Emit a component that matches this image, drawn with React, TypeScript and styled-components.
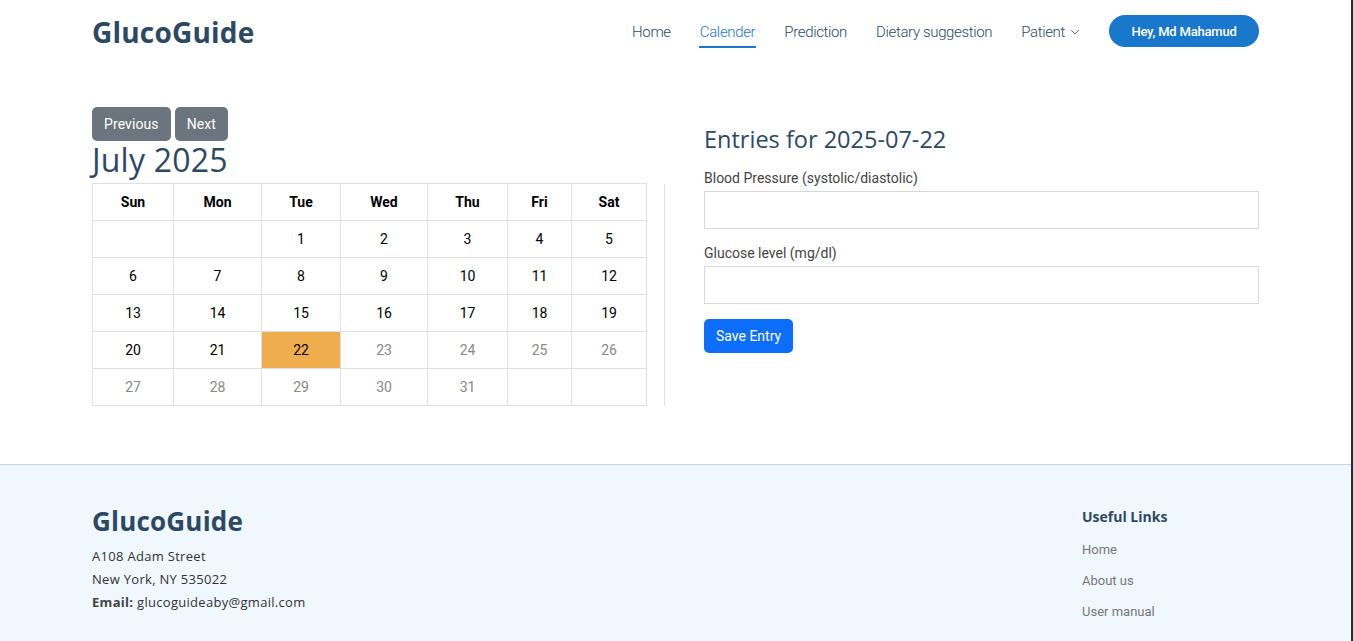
import React from "react";
import styled, { createGlobalStyle } from "styled-components";

const GlobalStyle = createGlobalStyle`
  html, body { margin: 0; padding: 0; background: #fff; }
  body { font-family: Roboto, "Liberation Sans", sans-serif; color: #212529; overflow: hidden; }
  * { box-sizing: border-box; }
`;

const Page = styled.div`
  width: 1353px;
  min-height: 641px;
  border-right: 2px solid #2b2b2b;
  background: #fff;
`;

const Container = styled.div`
  width: 1167px;
  margin: 0 auto;
`;

const Header = styled.header`
  height: 63px;
  display: flex;
  align-items: center;
  justify-content: space-between;
`;

const Logo = styled.div<{ $size: number }>`
  font-family: "Open Sans", sans-serif;
  font-weight: 700;
  font-size: ${(p) => p.$size}px;
  color: #2c4964;
  letter-spacing: 0.2px;
`;

const Nav = styled.nav`
  display: flex;
  align-items: center;
  gap: 29px;
  padding-top: 1px;
`;

const NavLink = styled.a<{ $active?: boolean }>`
  font-family: Roboto, sans-serif;
  font-weight: 300;
  font-size: 15px;
  letter-spacing: -0.35px;
  color: ${(p) => (p.$active ? "#1977cc" : "#2c4964")};
  text-decoration: none;
  position: relative;
  display: flex;
  align-items: center;
  gap: 5px;
  padding: 4px 0;
  ${(p) =>
    p.$active &&
    `&::after { content: ""; position: absolute; left: -1px; right: -1px; bottom: -3px; height: 2px; background: #1977cc; }`}
`;

const UserButton = styled.button`
  height: 32px;
  width: 150px;
  border: none;
  border-radius: 50px;
  background: #1977cc;
  color: #fff;
  font-family: Roboto, sans-serif;
  font-weight: 500;
  font-size: 13px;
  letter-spacing: -0.2px;
  margin-top: -2px;
`;

const Main = styled.section`
  padding: 44px 0 58px;
`;

const Row = styled.div`
  display: flex;
  align-items: stretch;
`;

const LeftCol = styled.div`
  width: 554px;
`;

const Divider = styled.div`
  width: 1px;
  background: #dee2e6;
  margin: 77px 39px 0 18px;
`;

const RightCol = styled.div`
  flex: 1;
  padding-top: 17px;
`;

const ButtonRow = styled.div`
  display: flex;
  gap: 4px;
`;

const GrayButton = styled.button`
  height: 34px;
  padding: 0 12px;
  border: none;
  border-radius: 5px;
  background: #6c757d;
  color: #fff;
  font-family: Roboto, sans-serif;
  font-size: 14px;
  letter-spacing: 0.1px;
`;

const MonthTitle = styled.h2`
  margin: 0 0 4px;
  font-family: "Open Sans", sans-serif;
  font-weight: 400;
  font-size: 32px;
  line-height: 38px;
  letter-spacing: 0.2px;
  color: #2c4964;
`;

const Table = styled.table`
  width: 554px;
  border-collapse: collapse;
  table-layout: fixed;
  font-family: Roboto, sans-serif;
  font-size: 14px;
`;

const Th = styled.th`
  border: 1px solid #dee2e6;
  height: 37px;
  padding: 0;
  text-align: center;
  font-weight: 700;
  color: #000;
`;

const Td = styled.td<{ $muted?: boolean; $selected?: boolean }>`
  border: 1px solid #dee2e6;
  height: 37px;
  padding: 0;
  text-align: center;
  color: ${(p) => (p.$muted ? "#888" : "#000")};
  background: ${(p) => (p.$selected ? "#efad4e" : "transparent")};
`;

const EntriesTitle = styled.h3`
  margin: 0 0 14px;
  font-family: "Open Sans", sans-serif;
  font-weight: 500;
  font-size: 23.5px;
  line-height: 30px;
  color: #2c4964;
`;

const Label = styled.label`
  display: block;
  font-family: Roboto, sans-serif;
  font-size: 14px;
  color: #444;
  line-height: 20px;
  margin-bottom: 3px;
`;

const Input = styled.input`
  display: block;
  width: 100%;
  height: 38px;
  border: 1px solid #d8d8d8;
  margin-bottom: 14px;
  outline: none;
`;

const SaveButton = styled.button`
  height: 34px;
  margin-top: 1px;
  padding: 0 12px;
  border: none;
  border-radius: 5px;
  background: #0d6efd;
  color: #fff;
  font-family: Roboto, sans-serif;
  font-size: 14px;
`;

const Footer = styled.footer`
  border-top: 1px solid #b9d6f2;
  background: #f1f7fe;
  padding: 38px 0 20px;
  min-height: 177px;
`;

const FooterRow = styled.div`
  display: flex;
  justify-content: space-between;
`;

const FooterCol = styled.div`
  display: flex;
  flex-direction: column;
`;

const Address = styled.p`
  margin: 6px 0 0;
  font-family: "Open Sans", sans-serif;
  font-size: 13px;
  line-height: 23px;
  letter-spacing: 0.3px;
  color: #333;
  strong { font-weight: 700; color: #444; }
`;

const LinksCol = styled.div`
  width: 177px;
  padding-top: 4px;
`;

const LinksTitle = styled.h4`
  margin: 0 0 7px;
  font-family: "Open Sans", sans-serif;
  font-weight: 700;
  font-size: 14px;
  line-height: 20px;
  color: #2c4964;
`;

const FooterLink = styled.a`
  display: block;
  font-family: Roboto, sans-serif;
  font-size: 13px;
  line-height: 31px;
  color: #777;
  text-decoration: none;
`;

const days = ["Sun", "Mon", "Tue", "Wed", "Thu", "Fri", "Sat"];
const widths = [81, 88, 79, 87, 80, 64, 75];

const weeks: (number | null)[][] = [
  [null, null, 1, 2, 3, 4, 5],
  [6, 7, 8, 9, 10, 11, 12],
  [13, 14, 15, 16, 17, 18, 19],
  [20, 21, 22, 23, 24, 25, 26],
  [27, 28, 29, 30, 31, null, null],
];

const Chevron = () => (
  <svg width="10" height="10" viewBox="0 0 16 16" fill="none" stroke="#2c4964" strokeWidth="1.4">
    <path d="M2 5l6 6 6-6" />
  </svg>
);

export default function App() {
  return (
    <>
      <GlobalStyle />
      <Page>
        <Container>
          <Header>
            <Logo $size={28}>GlucoGuide</Logo>
            <Nav>
              <NavLink>Home</NavLink>
              <NavLink $active>Calender</NavLink>
              <NavLink>Prediction</NavLink>
              <NavLink>Dietary suggestion</NavLink>
              <NavLink>
                Patient <Chevron />
              </NavLink>
              <UserButton>Hey, Md Mahamud</UserButton>
            </Nav>
          </Header>
        </Container>
        <Main>
          <Container>
            <Row>
              <LeftCol>
                <ButtonRow>
                  <GrayButton>Previous</GrayButton>
                  <GrayButton>Next</GrayButton>
                </ButtonRow>
                <MonthTitle>July 2025</MonthTitle>
                <Table>
                  <colgroup>
                    {widths.map((w, i) => (
                      <col key={i} style={{ width: w }} />
                    ))}
                  </colgroup>
                  <thead>
                    <tr>
                      {days.map((d) => (
                        <Th key={d}>{d}</Th>
                      ))}
                    </tr>
                  </thead>
                  <tbody>
                    {weeks.map((w, i) => (
                      <tr key={i}>
                        {w.map((n, j) => (
                          <Td key={j} $muted={n !== null && n > 22} $selected={n === 22}>
                            {n ?? ""}
                          </Td>
                        ))}
                      </tr>
                    ))}
                  </tbody>
                </Table>
              </LeftCol>
              <Divider />
              <RightCol>
                <EntriesTitle>Entries for 2025-07-22</EntriesTitle>
                <Label>Blood Pressure (systolic/diastolic)</Label>
                <Input />
                <Label>Glucose level (mg/dl)</Label>
                <Input />
                <SaveButton>Save Entry</SaveButton>
              </RightCol>
            </Row>
          </Container>
        </Main>
        <Footer>
          <Container>
            <FooterRow>
              <FooterCol>
                <Logo $size={26}>GlucoGuide</Logo>
                <Address>
                  A108 Adam Street
                  <br />
                  New York, NY 535022
                  <br />
                  <strong>Email:</strong> glucoguideaby@gmail.com
                </Address>
              </FooterCol>
              <LinksCol>
                <LinksTitle>Useful Links</LinksTitle>
                <FooterLink>Home</FooterLink>
                <FooterLink>About us</FooterLink>
                <FooterLink>User manual</FooterLink>
              </LinksCol>
            </FooterRow>
          </Container>
        </Footer>
      </Page>
    </>
  );
}
